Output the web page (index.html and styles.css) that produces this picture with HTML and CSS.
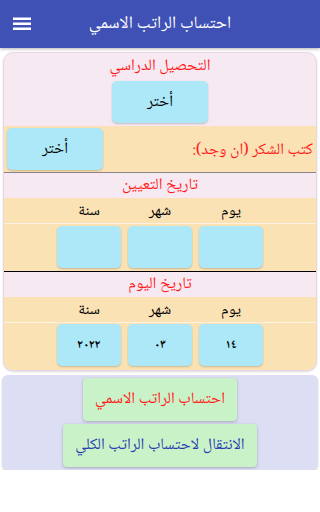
FILE: index.html
```html
<!DOCTYPE html>
<html lang="ar">
<head>
<meta charset="utf-8">
<link rel="stylesheet" href="styles.css">
</head>
<body>
<header class="appbar">
  <div class="menu">
    <svg width="18" height="14" viewBox="0 0 18 14"><rect x="0" y="0.5" width="18" height="2.5" fill="#fff"/><rect x="0" y="5.5" width="18" height="2.5" fill="#fff"/><rect x="0" y="10.5" width="18" height="2.5" fill="#fff"/></svg>
  </div>
  <div class="title">احتساب الراتب الاسمي</div>
  <div></div>
</header>

<main class="card" dir="rtl">
  <div class="sec-title first">التحصيل الدراسي</div>
  <div class="center-row"><button class="pick">أختر</button></div>

  <div class="thanks-row">
    <span class="label">كتب الشكر (ان وجد):</span>
    <button class="pick">أختر</button>
  </div>

  <div class="sec-title band">تاريخ التعيين</div>
  <div class="labels"><span>يوم</span><span>شهر</span><span>سنة</span></div>
  <div class="boxes dark-bottom"><div class="box"></div><div class="box"></div><div class="box"></div></div>

  <div class="sec-title band">تاريخ اليوم</div>
  <div class="labels"><span>يوم</span><span>شهر</span><span>سنة</span></div>
  <div class="boxes last"><div class="box">١٤</div><div class="box">٠٣</div><div class="box">٢٠٢٢</div></div>
</main>

<section class="actions" dir="rtl">
  <button class="go red">احتساب الراتب الاسمي</button>
  <button class="go blue">الانتقال لاحتساب الراتب الكلي</button>
</section>
</body>
</html>
```
FILE: styles.css
```css
* { box-sizing: border-box; }
body {
  margin: 0;
  width: 320px;
  background: #ffffff;
  font-family: "Noto Naskh Arabic", "Noto Sans Arabic", "DejaVu Sans", sans-serif;
}
button { font-family: inherit; border: none; cursor: pointer; }

.appbar {
  height: 48px;
  background: #3f51b5;
  display: grid;
  grid-template-columns: 1fr auto 1fr;
  align-items: center;
  box-shadow: 0 1px 3px rgba(0,0,0,0.3);
  position: relative;
  z-index: 1;
}
.menu { padding-left: 13px; display: flex; align-items: center; }
.menu svg { display: block; }
.title { color: #fff; font-size: 17.5px; text-align: center; }

.card {
  margin: 4px 3px 0 3px;
  background: #f7e9f2;
  border: 1px solid #e8d8e6;
  border-radius: 10px;
  overflow: hidden;
  box-shadow: 0 1px 2px rgba(0,0,0,0.15);
}
.sec-title {
  color: #ff1a1a;
  font-size: 16px;
  text-align: center;
}
.sec-title.first { padding-top: 2px; height: 28px; line-height: 24px; }
.sec-title.band { height: 25px; line-height: 25px; }

.center-row { display: flex; justify-content: center; padding-bottom: 3px; }
.pick {
  width: 96px;
  height: 42px;
  background: #ade8f8;
  border-radius: 5px;
  box-shadow: 0 1px 2px rgba(0,0,0,0.2);
  font-size: 16px;
  color: #000;
}

.thanks-row {
  background: #fae2b5;
  display: flex;
  align-items: center;
  justify-content: space-between;
  padding: 2px 3px 2px 3px;
  border-bottom: 1px solid #8a8588;
}
.thanks-row .label { color: #ff1a1a; font-size: 16px; padding-top: 3px; }

.labels {
  background: #fae2b5;
  height: 26px;
  display: flex;
  justify-content: center;
  gap: 7px;
  border-bottom: 1px solid #fdf1e4;
}
.labels span {
  width: 64px;
  text-align: center;
  font-size: 15.5px;
  line-height: 24px;
  padding-top: 2px;
  color: #000;
}

.boxes {
  background: #fae2b5;
  display: flex;
  justify-content: center;
  gap: 7px;
  padding: 2px 0 3px;
}
.boxes.dark-bottom { border-bottom: 1px solid #000; }
.boxes.last { padding: 1px 0 4px; }
.box {
  width: 64px;
  height: 42px;
  background: #ade8f8;
  border-radius: 5px;
  box-shadow: 0 1px 2px rgba(0,0,0,0.2);
  display: flex;
  align-items: center;
  justify-content: center;
  font-size: 12px;
  font-weight: bold;
  color: #000;
}

.actions {
  margin: 4px 2px 0 2px;
  background: #dcdef4;
  border-radius: 6px;
  box-shadow: 0 1px 2px rgba(0,0,0,0.2);
  display: flex;
  flex-direction: column;
  align-items: center;
  gap: 3px;
  padding: 3px 0 3px;
}
.go {
  height: 43px;
  padding: 0 12px;
  background: #c9f2c9;
  border-radius: 4px;
  box-shadow: 0 1px 3px rgba(0,0,0,0.25);
  font-size: 16px;
}
.go.red { color: #ff1a1a; }
.go.blue { color: #2a3bb0; }
```
